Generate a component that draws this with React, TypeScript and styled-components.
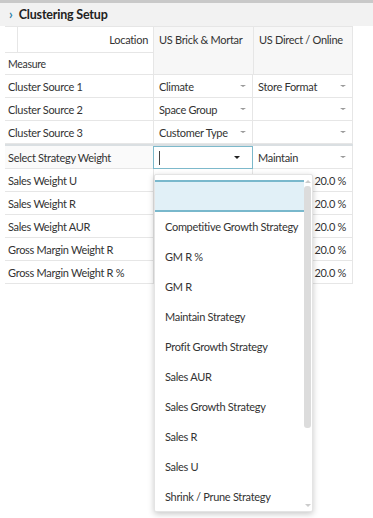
import styled, { createGlobalStyle } from "styled-components";

const GlobalStyle = createGlobalStyle`
    body {
        margin: 0;
        background: #fff;
        font-family: Lato, "Noto Sans", sans-serif;
        color: #333;
    }
`;

const Page = styled.div`
    width: 373px;
    height: 518px;
    overflow: hidden;
`;

const SectionHeader = styled.div`
    height: 23px;
    border-top: 3px solid #c9c9c9;
    background: #f2f2f2;
    display: flex;
    align-items: center;
    padding-left: 9px;
    gap: 6px;
`;

const Chevron = styled.span`
    color: #2a7fa8;
    font-size: 13px;
    font-weight: 700;
    line-height: 1;
    margin-top: -1px;
`;

const Title = styled.span`
    font-size: 12.5px;
    font-weight: 700;
    letter-spacing: -0.2px;
    color: #222;
`;

const Table = styled.div`
    position: relative;
    margin-left: 5px;
    width: 348px;
    font-size: 11px;
    letter-spacing: -0.3px;
`;

const HeadBlock = styled.div`
    display: flex;
    height: 48px;
    border-top: 1px solid #e6e6e6;
`;

const HeadLabels = styled.div`
    width: 148px;
    display: flex;
    flex-direction: column;
`;

const LocationLine = styled.div`
    display: flex;
    height: 25px;
    border-bottom: 1px solid #e6e6e6;
`;

const Corner = styled.div`
    width: 12px;
    border-right: 1px solid #e6e6e6;
`;

const LocationCell = styled.div`
    flex: 1;
    display: flex;
    align-items: center;
    justify-content: flex-end;
    padding-right: 5px;
`;

const MeasureCell = styled.div`
    flex: 1;
    display: flex;
    align-items: center;
    padding-left: 3px;
    font-size: 10.5px;
    border-bottom: 1px solid #e6e6e6;
`;

const ColumnHead = styled.div`
    width: 100px;
    box-sizing: border-box;
    background: #f7f7f7;
    border-left: 1px solid #e6e6e6;
    border-bottom: 1px solid #e6e6e6;
    padding: 6px 0 0 5px;
    &:last-child {
        border-right: 1px solid #e6e6e6;
    }
`;

const Row = styled.div<{ $thick?: boolean; $shade?: boolean }>`
    display: flex;
    box-sizing: border-box;
    border-bottom: 1px solid #e6e6e6;
    border-top: ${(p) => (p.$thick ? "2px solid #dadfe2" : "none")};
    height: ${(p) => (p.$thick ? "25px" : "23px")};
    background: ${(p) => (p.$shade ? "#fafafa" : "#fff")};
`;

const Label = styled.div`
    width: 148px;
    display: flex;
    align-items: center;
    padding-left: 3px;
    box-sizing: border-box;
`;

const Cell = styled.div<{ $focus?: boolean; $right?: boolean }>`
    width: 100px;
    box-sizing: border-box;
    display: flex;
    align-items: center;
    justify-content: ${(p) => (p.$right ? "flex-end" : "space-between")};
    padding: 0 6px 0 5px;
    border-left: 1px solid ${(p) => (p.$focus ? "#7db9cb" : "#e6e6e6")};
    border-right: 1px solid ${(p) => (p.$focus ? "#7db9cb" : "#e6e6e6")};
    ${(p) => (p.$focus ? "border-top: 1px solid #7db9cb; border-bottom: 1px solid #7db9cb; margin-bottom: -1px; padding-right: 12px;" : "")}
    background: #fff;
    & + & {
        border-left: ${(p) => (p.$focus ? "1px solid #7db9cb" : "none")};
    }
`;

const Caret = styled.span<{ $dark?: boolean }>`
    width: 0;
    height: 0;
    border-left: ${(p) => (p.$dark ? "3.5px" : "3px")} solid transparent;
    border-right: ${(p) => (p.$dark ? "3.5px" : "3px")} solid transparent;
    border-top: ${(p) => (p.$dark ? "3px solid #222" : "2px solid #999")};
`;

const Cursor = styled.span`
    width: 1px;
    height: 14px;
    background: #444;
`;

const Popup = styled.div`
    position: absolute;
    left: 149px;
    top: 148px;
    width: 159px;
    height: 338px;
    box-sizing: border-box;
    background: #fff;
    border: 1px solid #e4e4e4;
    border-radius: 2px;
    box-shadow: 0 2px 6px rgba(0, 0, 0, 0.22);
    padding-top: 5px;
    display: flex;
    overflow: hidden;
`;

const OptionList = styled.div`
    flex: 1;
    display: flex;
    flex-direction: column;
`;

const Option = styled.div<{ $selected?: boolean }>`
    flex: none;
    height: 30px;
    box-sizing: border-box;
    display: flex;
    align-items: center;
    padding-left: 10px;
    padding-bottom: 1px;
    font-size: 11px;
    white-space: nowrap;
    color: #333;
    ${(p) =>
        p.$selected
            ? "height: 32px; background: #e1f0f7; border-top: 2px solid #79b8cc; border-bottom: 2px solid #79b8cc;"
            : ""}
`;

const Scrollbar = styled.div`
    width: 8px;
    display: flex;
    flex-direction: column;
    align-items: center;
    padding: 0 0 4px;
    gap: 3px;
`;

const ScrollArrow = styled.span<{ $down?: boolean }>`
    width: 0;
    height: 0;
    border-left: 3px solid transparent;
    border-right: 3px solid transparent;
    ${(p) => (p.$down ? "border-top: 3px solid #ccc;" : "border-bottom: 3px solid #ccc;")}
`;

const Track = styled.div`
    flex: 1;
    width: 8px;
    display: flex;
    flex-direction: column;
`;

const Thumb = styled.div`
    width: 7px;
    height: 242px;
    border-radius: 3px;
    background: #dcdcdc;
`;

const options = [
    "Competitive Growth Strategy",
    "GM R %",
    "GM R",
    "Maintain Strategy",
    "Profit Growth Strategy",
    "Sales AUR",
    "Sales Growth Strategy",
    "Sales R",
    "Sales U",
    "Shrink / Prune Strategy",
];

const sources = [
    { label: "Cluster Source 1", a: "Climate", b: "Store Format" },
    { label: "Cluster Source 2", a: "Space Group", b: "" },
    { label: "Cluster Source 3", a: "Customer Type", b: "" },
];

const weights = [
    "Sales Weight U",
    "Sales Weight R",
    "Sales Weight AUR",
    "Gross Margin Weight R",
    "Gross Margin Weight R %",
];

function App() {
    return (
        <Page>
            <GlobalStyle />
            <SectionHeader>
                <Chevron>›</Chevron>
                <Title>Clustering Setup</Title>
            </SectionHeader>
            <Table>
                <HeadBlock>
                    <HeadLabels>
                        <LocationLine>
                            <Corner />
                            <LocationCell>Location</LocationCell>
                        </LocationLine>
                        <MeasureCell>Measure</MeasureCell>
                    </HeadLabels>
                    <ColumnHead>US Brick &amp; Mortar</ColumnHead>
                    <ColumnHead>US Direct / Online</ColumnHead>
                </HeadBlock>
                {sources.map((s) => (
                    <Row key={s.label}>
                        <Label>{s.label}</Label>
                        <Cell>
                            <span>{s.a}</span>
                            <Caret />
                        </Cell>
                        <Cell>
                            <span>{s.b}</span>
                            <Caret />
                        </Cell>
                    </Row>
                ))}
                <Row $thick $shade>
                    <Label>Select Strategy Weight</Label>
                    <Cell $focus>
                        <Cursor />
                        <Caret $dark />
                    </Cell>
                    <Cell>
                        <span>Maintain</span>
                        <Caret />
                    </Cell>
                </Row>
                {weights.map((w) => (
                    <Row key={w}>
                        <Label>{w}</Label>
                        {/* brick & mortar values sit under the open list */}
                        <Cell $right />
                        <Cell $right>20.0 %</Cell>
                    </Row>
                ))}
                <Popup>
                    <OptionList>
                        <Option $selected />
                        {options.map((o) => (
                            <Option key={o}>{o}</Option>
                        ))}
                    </OptionList>
                    <Scrollbar>
                        <ScrollArrow />
                        <Track>
                            <Thumb />
                        </Track>
                        <ScrollArrow $down />
                    </Scrollbar>
                </Popup>
            </Table>
        </Page>
    );
}

export default App;
